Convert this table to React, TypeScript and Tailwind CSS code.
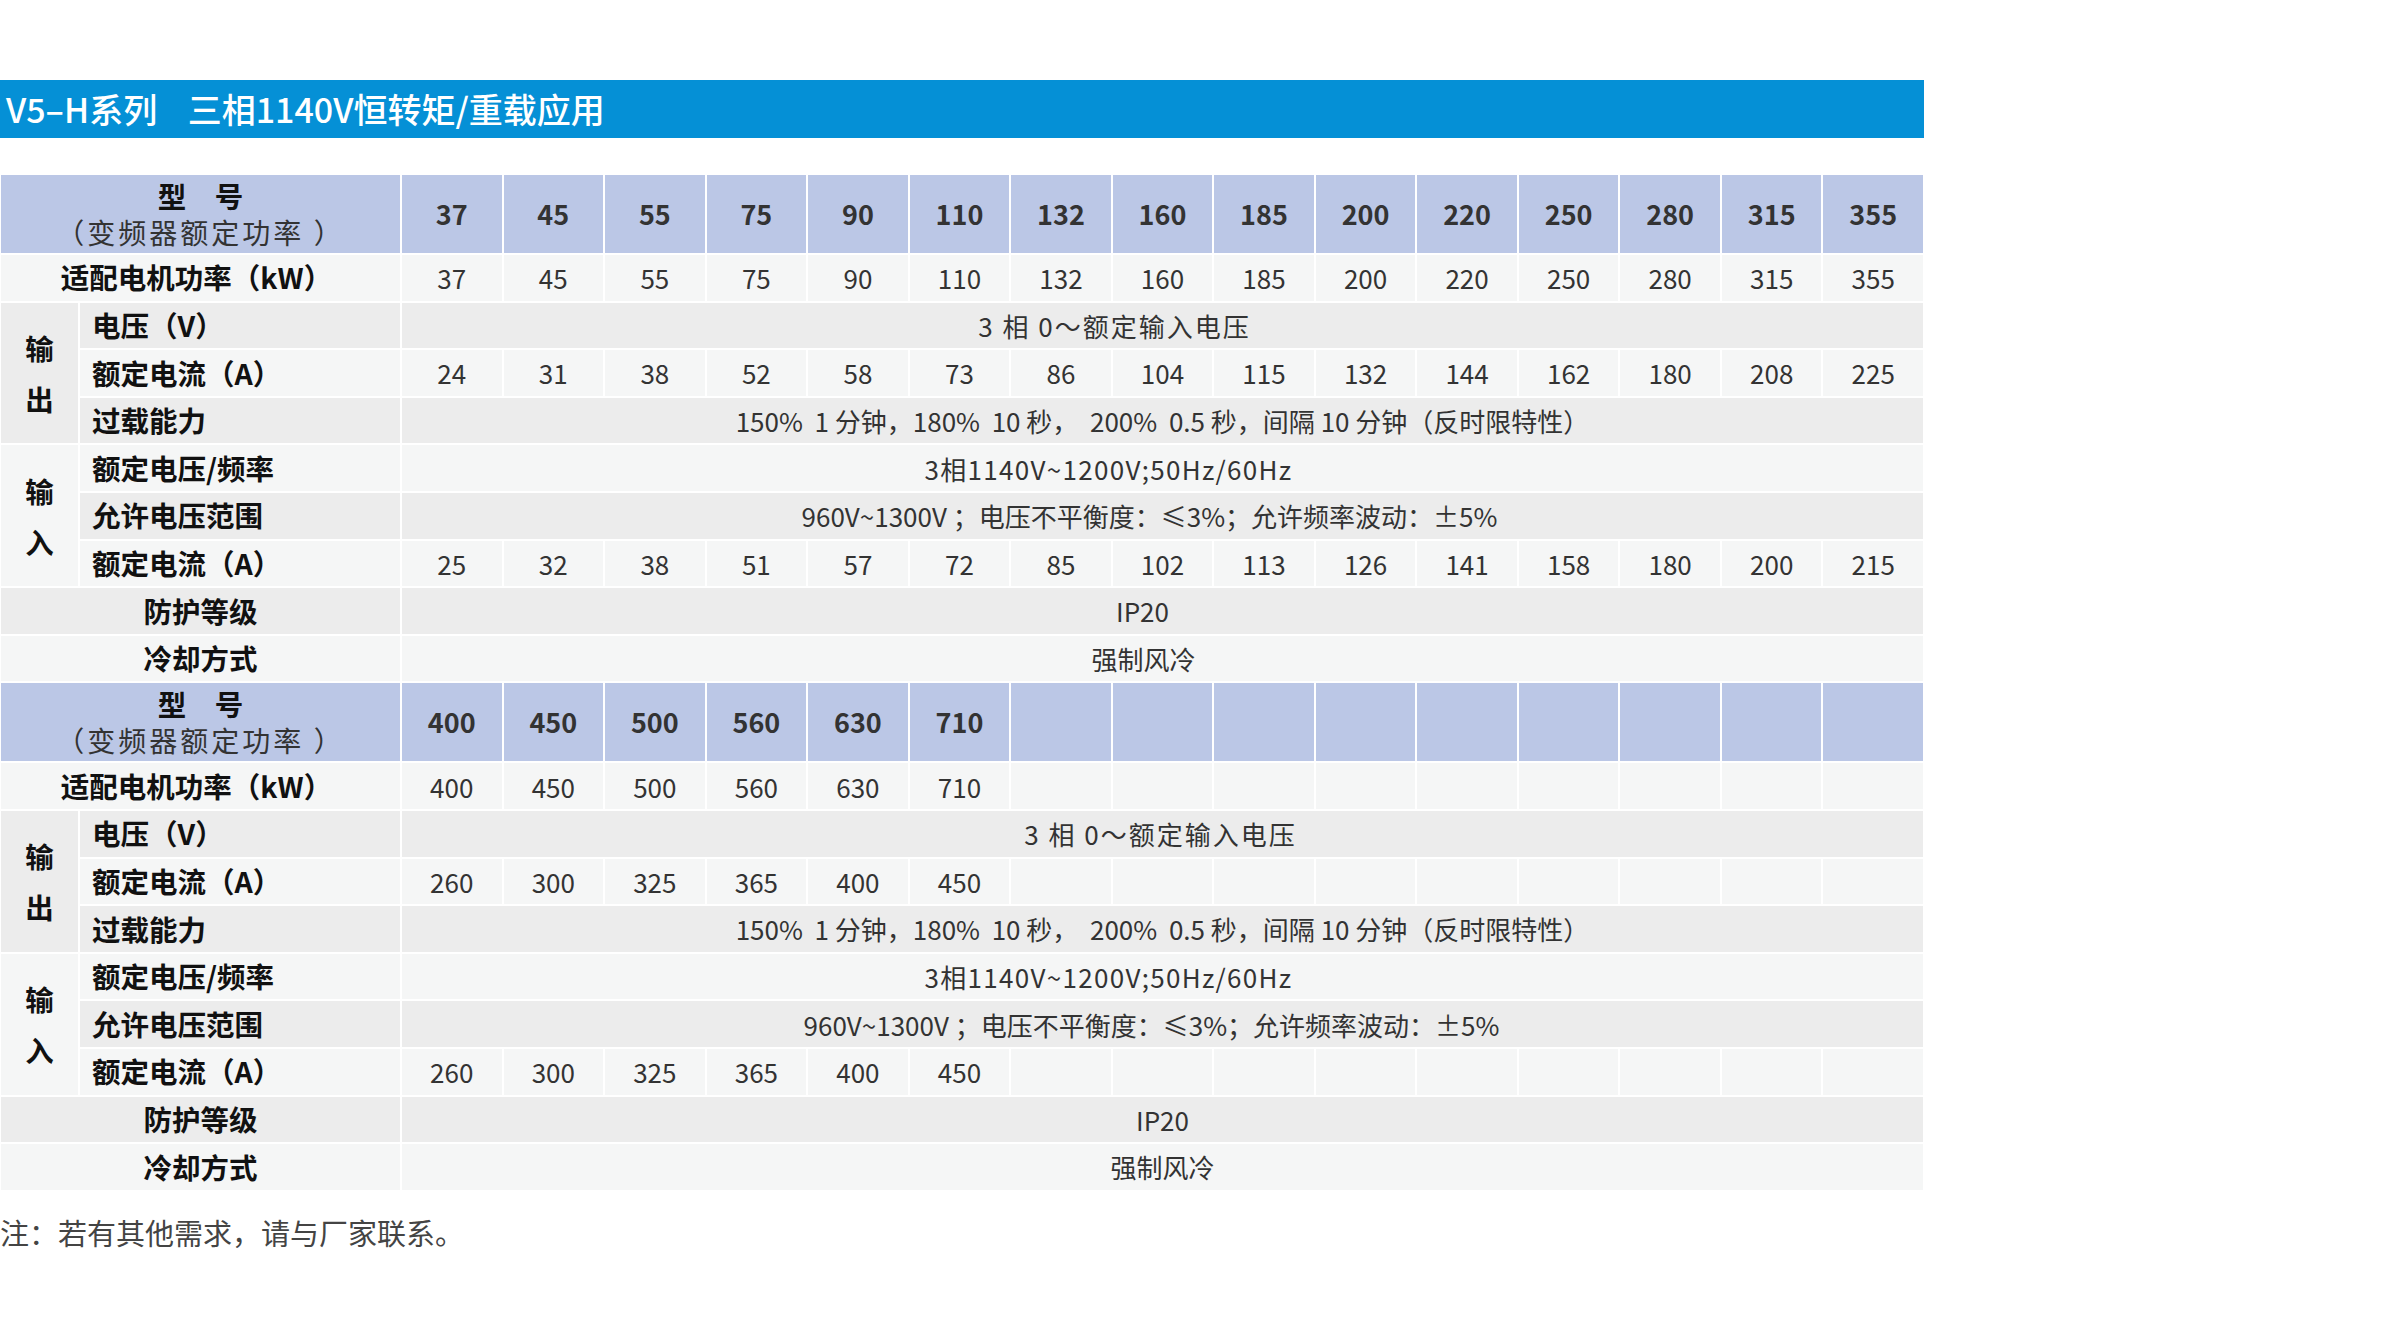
const light = "bg-[#f5f6f6]";
const dark = "bg-[#ececec]";
const head = "bg-[#bbc7e6]";

type Section = {
  models: string[];
  outCurrent: string[];
  inCurrent: string[];
  shift: {
    voltage: string;
    rated: string;
    range: string;
    ip: string;
    cooling: string;
  };
};

const sections: Section[] = [
  {
    models: ["37", "45", "55", "75", "90", "110", "132", "160", "185", "200", "220", "250", "280", "315", "355"],
    outCurrent: ["24", "31", "38", "52", "58", "73", "86", "104", "115", "132", "144", "162", "180", "208", "225"],
    inCurrent: ["25", "32", "38", "51", "57", "72", "85", "102", "113", "126", "141", "158", "180", "200", "215"],
    shift: { voltage: "pr-[96px]", rated: "pr-[108px]", range: "pr-[26px]", ip: "pr-[40px]", cooling: "pr-[38px]" },
  },
  {
    models: ["400", "450", "500", "560", "630", "710"],
    outCurrent: ["260", "300", "325", "365", "400", "450"],
    inCurrent: ["260", "300", "325", "365", "400", "450"],
    shift: { voltage: "pr-[4px]", rated: "pr-[108px]", range: "pr-[22px]", ip: "", cooling: "" },
  },
];

const cell = "border-2 border-white p-0";
const label = "font-bold text-[28.5px] text-[#111]";
const value = "text-[26px] text-[#333] text-center";

function Values({ items, bg }: { items: string[]; bg: string }) {
  const cells = Array.from({ length: 15 }, (_, i) => items[i] ?? "");
  return (
    <>
      {cells.map((v, i) => (
        <td key={i} className={`${cell} ${bg} ${value}`}>
          {v}
        </td>
      ))}
    </>
  );
}

function Merged({ text, bg, shift, extra = "" }: { text: string; bg: string; shift: string; extra?: string }) {
  return (
    <td colSpan={15} className={`${cell} ${bg} ${value} whitespace-pre ${shift} ${extra}`}>
      {text}
    </td>
  );
}

function SectionRows({ s }: { s: Section }) {
  const row = "h-[47.6px]";
  return (
    <>
      <tr className="h-[80px]">
        <td colSpan={2} className={`${cell} ${head} text-center`}>
          <div className="font-bold text-[28.5px] leading-[36px] text-[#111]">型　号</div>
          <div className="text-[28px] leading-[36px] tracking-[3px] text-[#333]">（变频器额定功率 ）</div>
        </td>
        {Array.from({ length: 15 }, (_, i) => (
          <td key={i} className={`${cell} ${head} text-center text-[27px] font-semibold text-[#333]`}>
            {s.models[i] ?? ""}
          </td>
        ))}
      </tr>
      <tr className={row}>
        <td colSpan={2} className={`${cell} ${light} ${label} text-center pr-[8px]`}>
          适配电机功率（kW）
        </td>
        <Values items={s.models} bg={light} />
      </tr>

      <tr className={row}>
        <td rowSpan={3} className={`${cell} ${dark} ${label} text-center leading-[51px]`}>
          输<br />出
        </td>
        <td className={`${cell} ${dark} ${label} pl-[12px]`}>电压（V）</td>
        <Merged text="3 相 0～额定输入电压" bg={dark} shift={s.shift.voltage} extra="tracking-[2px]" />
      </tr>
      <tr className={row}>
        <td className={`${cell} ${light} ${label} pl-[12px]`}>额定电流（A）</td>
        <Values items={s.outCurrent} bg={light} />
      </tr>
      <tr className={row}>
        <td className={`${cell} ${dark} ${label} pl-[12px]`}>过载能力</td>
        <Merged
          text="150%  1 分钟，180%  10 秒，  200%  0.5 秒，间隔 10 分钟（反时限特性）"
          bg={dark}
          shift=""
        />
      </tr>

      <tr className={row}>
        <td rowSpan={3} className={`${cell} ${light} ${label} text-center leading-[51px]`}>
          输<br />入
        </td>
        <td className={`${cell} ${light} ${label} pl-[12px]`}>额定电压/频率</td>
        <Merged text="3相1140V~1200V;50Hz/60Hz" bg={light} shift={s.shift.rated} extra="tracking-[1.3px]" />
      </tr>
      <tr className={row}>
        <td className={`${cell} ${dark} ${label} pl-[12px]`}>允许电压范围</td>
        <Merged
          text="960V~1300V ；电压不平衡度：≤3%；允许频率波动：±5%"
          bg={dark}
          shift={s.shift.range}
        />
      </tr>
      <tr className={row}>
        <td className={`${cell} ${light} ${label} pl-[12px]`}>额定电流（A）</td>
        <Values items={s.inCurrent} bg={light} />
      </tr>

      <tr className={row}>
        <td colSpan={2} className={`${cell} ${dark} ${label} text-center`}>防护等级</td>
        <Merged text="IP20" bg={dark} shift={s.shift.ip} />
      </tr>
      <tr className={row}>
        <td colSpan={2} className={`${cell} ${light} ${label} text-center`}>冷却方式</td>
        <Merged text="强制风冷" bg={light} shift={s.shift.cooling} />
      </tr>
    </>
  );
}

export default function App() {
  return (
    <div className="min-h-[1333px] w-[2400px] bg-white font-['Noto_Sans_CJK_SC','Noto_Sans',sans-serif] pt-[80px] [text-spacing-trim:space-all]">
      <div className="flex h-[58px] w-[1924px] items-center bg-[#0590d6] pl-[6px]">
        <span className="whitespace-pre text-[34px] font-medium leading-none text-white">
          V5–H系列    三相1140V恒转矩/重载应用
        </span>
      </div>

      <table className="mt-[35px] w-[1926px] -ml-[1px] table-fixed border-collapse">
        <colgroup>
          <col className="w-[79px]" />
          <col className="w-[322px]" />
          {Array.from({ length: 15 }, (_, i) => (
            <col key={i} />
          ))}
        </colgroup>
        <tbody>
          {sections.map((s, i) => (
            <SectionRows key={i} s={s} />
          ))}
        </tbody>
      </table>

      <p className="mt-[22px] text-[29px] leading-[36px] text-[#444]">
        注：若有其他需求，请与厂家联系。
      </p>
    </div>
  );
}
